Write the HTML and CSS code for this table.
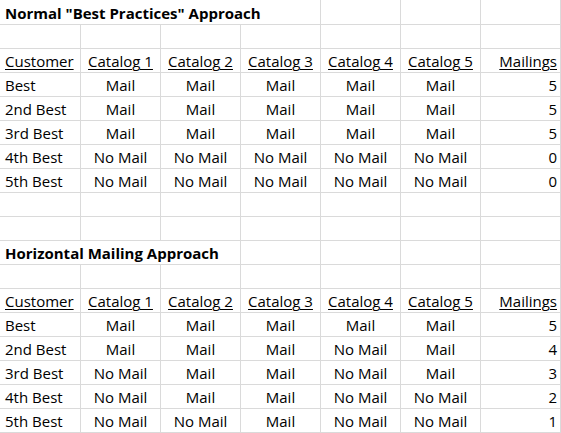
FILE: index.html
```html
<!DOCTYPE html>
<html>
<head>
<meta charset="utf-8">
<link rel="stylesheet" href="styles.css">
</head>
<body>
<div class="sheet">
  <div class="cell title span4">Normal "Best Practices" Approach</div><div class="cell"></div><div class="cell"></div><div class="cell"></div>
  <div class="cell"></div><div class="cell"></div><div class="cell"></div><div class="cell"></div><div class="cell"></div><div class="cell"></div><div class="cell"></div>
  <div class="cell l"><u>Customer</u></div><div class="cell c"><u>Catalog 1</u></div><div class="cell c"><u>Catalog 2</u></div><div class="cell c"><u>Catalog 3</u></div><div class="cell c"><u>Catalog 4</u></div><div class="cell c"><u>Catalog 5</u></div><div class="cell r"><u>Mailings</u></div>
  <div class="cell l">Best</div><div class="cell c">Mail</div><div class="cell c">Mail</div><div class="cell c">Mail</div><div class="cell c">Mail</div><div class="cell c">Mail</div><div class="cell r">5</div>
  <div class="cell l">2nd Best</div><div class="cell c">Mail</div><div class="cell c">Mail</div><div class="cell c">Mail</div><div class="cell c">Mail</div><div class="cell c">Mail</div><div class="cell r">5</div>
  <div class="cell l">3rd Best</div><div class="cell c">Mail</div><div class="cell c">Mail</div><div class="cell c">Mail</div><div class="cell c">Mail</div><div class="cell c">Mail</div><div class="cell r">5</div>
  <div class="cell l">4th Best</div><div class="cell c">No Mail</div><div class="cell c">No Mail</div><div class="cell c">No Mail</div><div class="cell c">No Mail</div><div class="cell c">No Mail</div><div class="cell r">0</div>
  <div class="cell l">5th Best</div><div class="cell c">No Mail</div><div class="cell c">No Mail</div><div class="cell c">No Mail</div><div class="cell c">No Mail</div><div class="cell c">No Mail</div><div class="cell r">0</div>
  <div class="cell"></div><div class="cell"></div><div class="cell"></div><div class="cell"></div><div class="cell"></div><div class="cell"></div><div class="cell"></div>
  <div class="cell"></div><div class="cell"></div><div class="cell"></div><div class="cell"></div><div class="cell"></div><div class="cell"></div><div class="cell"></div>
  <div class="cell title span3">Horizontal Mailing Approach</div><div class="cell"></div><div class="cell"></div><div class="cell"></div><div class="cell"></div>
  <div class="cell"></div><div class="cell"></div><div class="cell"></div><div class="cell"></div><div class="cell"></div><div class="cell"></div><div class="cell"></div>
  <div class="cell l"><u>Customer</u></div><div class="cell c"><u>Catalog 1</u></div><div class="cell c"><u>Catalog 2</u></div><div class="cell c"><u>Catalog 3</u></div><div class="cell c"><u>Catalog 4</u></div><div class="cell c"><u>Catalog 5</u></div><div class="cell r"><u>Mailings</u></div>
  <div class="cell l">Best</div><div class="cell c">Mail</div><div class="cell c">Mail</div><div class="cell c">Mail</div><div class="cell c">Mail</div><div class="cell c">Mail</div><div class="cell r">5</div>
  <div class="cell l">2nd Best</div><div class="cell c">Mail</div><div class="cell c">Mail</div><div class="cell c">Mail</div><div class="cell c">No Mail</div><div class="cell c">Mail</div><div class="cell r">4</div>
  <div class="cell l">3rd Best</div><div class="cell c">No Mail</div><div class="cell c">Mail</div><div class="cell c">Mail</div><div class="cell c">No Mail</div><div class="cell c">Mail</div><div class="cell r">3</div>
  <div class="cell l">4th Best</div><div class="cell c">No Mail</div><div class="cell c">Mail</div><div class="cell c">Mail</div><div class="cell c">No Mail</div><div class="cell c">No Mail</div><div class="cell r">2</div>
  <div class="cell l">5th Best</div><div class="cell c">No Mail</div><div class="cell c">No Mail</div><div class="cell c">Mail</div><div class="cell c">No Mail</div><div class="cell c">No Mail</div><div class="cell r">1</div>
</div>
</body>
</html>
```
FILE: styles.css
```css
html, body {
  margin: 0;
  padding: 0;
  background: #ffffff;
}
.sheet {
  display: grid;
  grid-template-columns: 81px repeat(6, 80px);
  grid-template-rows: 25px repeat(17, 24px);
  font-family: "Open Sans", Lato, sans-serif;
  font-size: 15px;
  color: #000000;
}
.cell {
  box-sizing: border-box;
  border-right: 1px solid #dadada;
  border-bottom: 1px solid #dadada;
  display: flex;
  align-items: flex-end;
  padding-bottom: 1px;
  line-height: 20px;
  white-space: nowrap;
  overflow: visible;
}
.span4 { grid-column: span 4; }
.span3 { grid-column: span 3; }
.title {
  font-weight: bold;
  padding-left: 5px;
}
.l { padding-left: 5px; }
.c { justify-content: center; }
.r { justify-content: flex-end; padding-right: 3px; }
u {
  text-decoration: underline;
  text-underline-offset: 2px;
  text-decoration-thickness: 1px;
}
```
